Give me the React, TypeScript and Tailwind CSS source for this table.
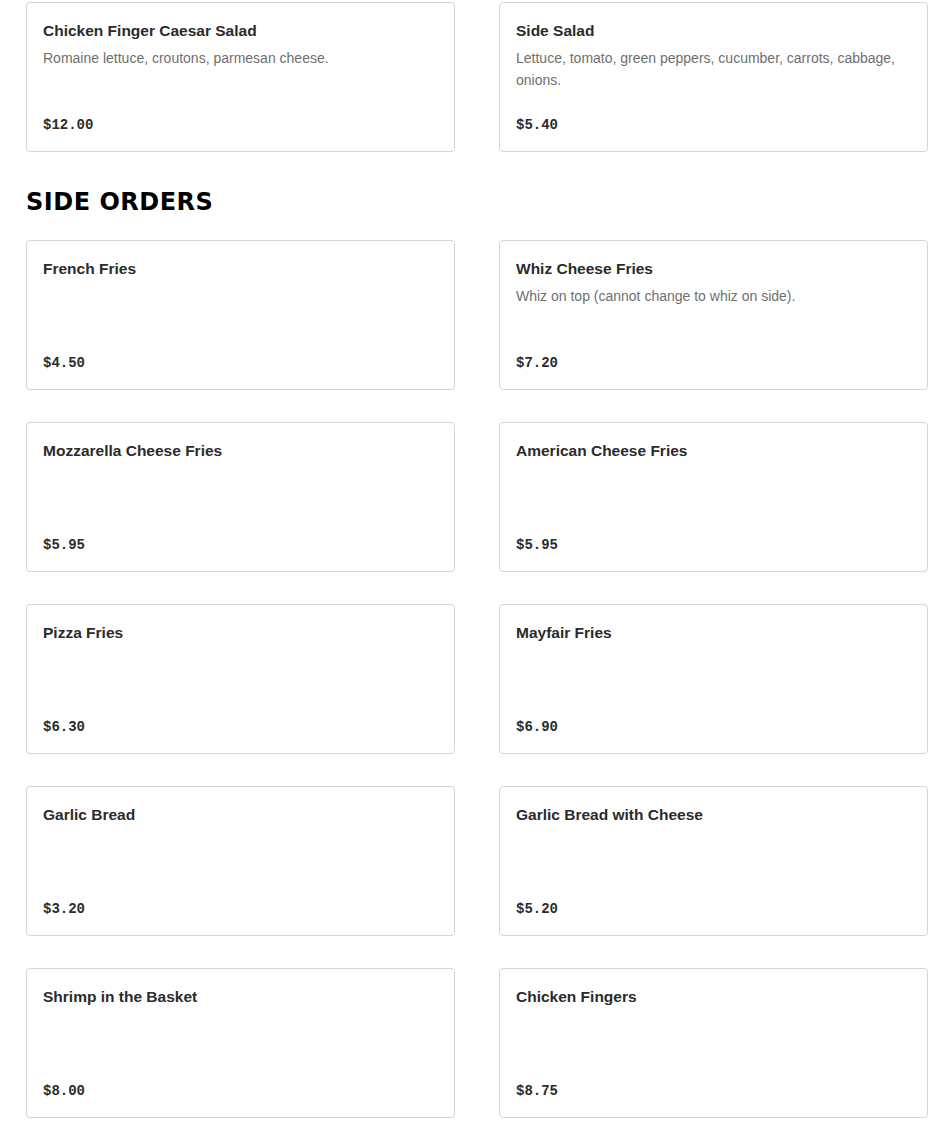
import React from "react"

type Item = { name: string; desc?: string; price: string }

const salads: Item[] = [
  { name: "Chicken Finger Caesar Salad", desc: "Romaine lettuce, croutons, parmesan cheese.", price: "$12.00" },
  { name: "Side Salad", desc: "Lettuce, tomato, green peppers, cucumber, carrots, cabbage, onions.", price: "$5.40" },
]

const sides: Item[] = [
  { name: "French Fries", price: "$4.50" },
  { name: "Whiz Cheese Fries", desc: "Whiz on top (cannot change to whiz on side).", price: "$7.20" },
  { name: "Mozzarella Cheese Fries", price: "$5.95" },
  { name: "American Cheese Fries", price: "$5.95" },
  { name: "Pizza Fries", price: "$6.30" },
  { name: "Mayfair Fries", price: "$6.90" },
  { name: "Garlic Bread", price: "$3.20" },
  { name: "Garlic Bread with Cheese", price: "$5.20" },
  { name: "Shrimp in the Basket", price: "$8.00" },
  { name: "Chicken Fingers", price: "$8.75" },
]

const Card = ({ item }: { item: Item }) => (
  <div className="h-[150px] flex flex-col justify-between rounded border border-[#d4d4d4] bg-white p-4">
    <div>
      <h3 className="text-[15.5px] leading-6 font-bold text-[#2b2b2b]">{item.name}</h3>
      {item.desc && (
        <p className="mt-1 text-[14px] leading-[22px] text-[#6f6f6f]">{item.desc}</p>
      )}
    </div>
    <p className="text-[14px] leading-5 font-bold text-[#2b2b2b] font-['Liberation_Mono',monospace]">
      {item.price}
    </p>
  </div>
)

export default function App() {
  return (
    <div className="min-h-screen bg-white font-['Liberation_Sans',Arial,sans-serif] pl-[26px] pr-[22px] pt-[2px]">
      <div className="grid grid-cols-2 gap-x-[44px] gap-y-8">
        {salads.map((s) => <Card key={s.name} item={s} />)}
      </div>
      <h2 className="mt-[34px] mb-[22px] text-[24px] leading-[32px] font-black tracking-[0.5px] text-black font-['DejaVu_Sans',sans-serif]">
        SIDE ORDERS
      </h2>
      <div className="grid grid-cols-2 gap-x-[44px] gap-y-8">
        {sides.map((s) => <Card key={s.name} item={s} />)}
      </div>
    </div>
  )
}
